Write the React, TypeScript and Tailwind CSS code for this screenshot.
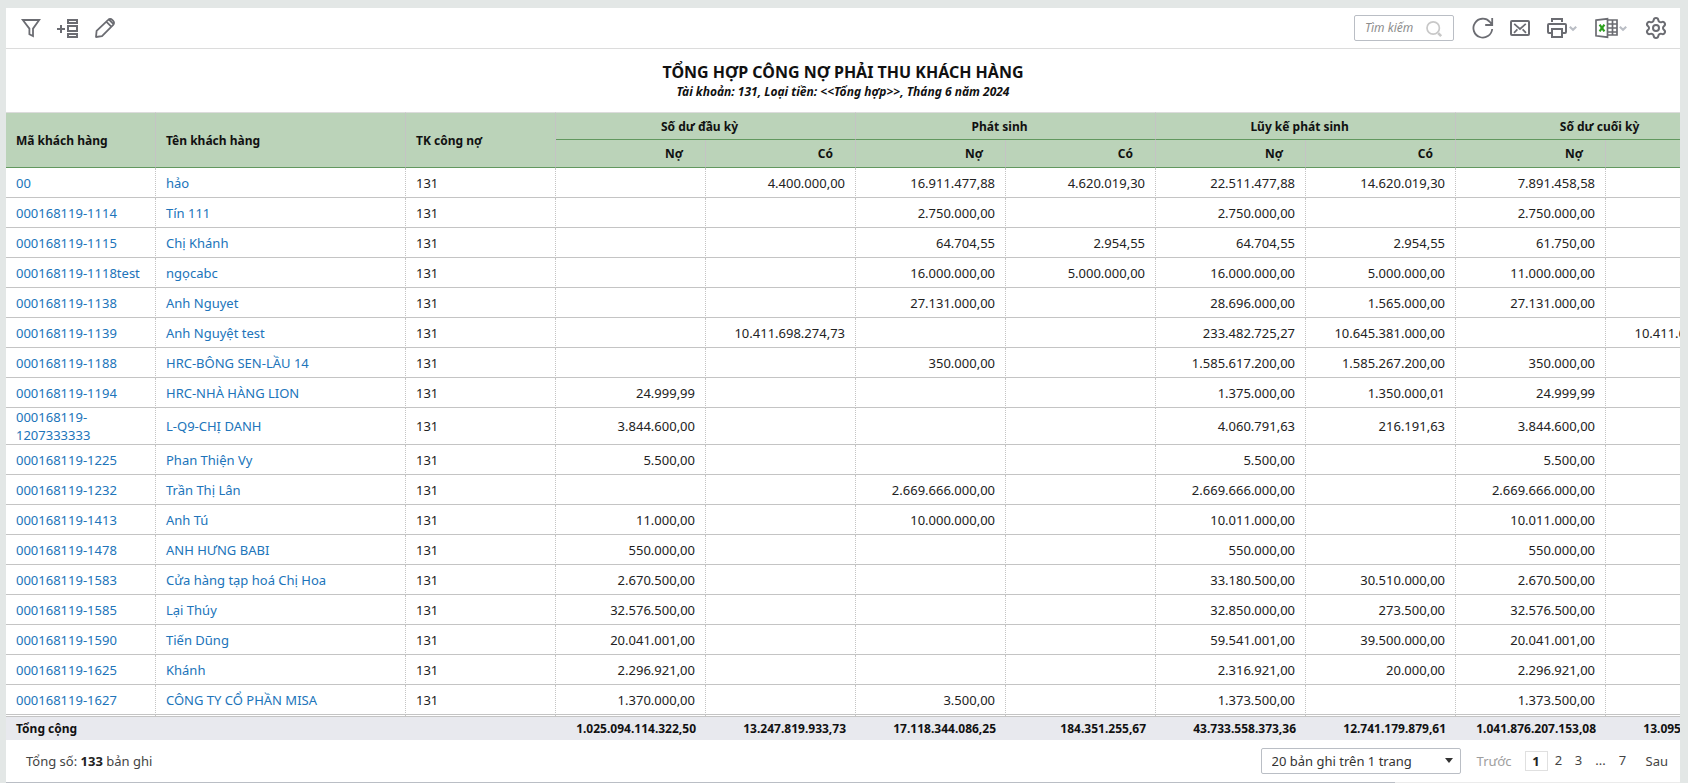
import React from "react";
import { Settings } from "lucide-react";

const groups = ["Số dư đầu kỳ", "Phát sinh", "Lũy kế phát sinh", "Số dư cuối kỳ"];

type Row = [string, string, string, string, string, string, string, string, string, string];

const rows: Row[] = [
  ["00", "hảo", "", "4.400.000,00", "16.911.477,88", "4.620.019,30", "22.511.477,88", "14.620.019,30", "7.891.458,58", ""],
  ["000168119-1114", "Tín 111", "", "", "2.750.000,00", "", "2.750.000,00", "", "2.750.000,00", ""],
  ["000168119-1115", "Chị Khánh", "", "", "64.704,55", "2.954,55", "64.704,55", "2.954,55", "61.750,00", ""],
  ["000168119-1118test", "ngọcabc", "", "", "16.000.000,00", "5.000.000,00", "16.000.000,00", "5.000.000,00", "11.000.000,00", ""],
  ["000168119-1138", "Anh Nguyet", "", "", "27.131.000,00", "", "28.696.000,00", "1.565.000,00", "27.131.000,00", ""],
  ["000168119-1139", "Anh Nguyệt test", "", "10.411.698.274,73", "", "", "233.482.725,27", "10.645.381.000,00", "", "10.411.698.274,73"],
  ["000168119-1188", "HRC-BÔNG SEN-LẦU 14", "", "", "350.000,00", "", "1.585.617.200,00", "1.585.267.200,00", "350.000,00", ""],
  ["000168119-1194", "HRC-NHÀ HÀNG LION", "24.999,99", "", "", "", "1.375.000,00", "1.350.000,01", "24.999,99", ""],
  ["000168119-1207333333", "L-Q9-CHỊ DANH", "3.844.600,00", "", "", "", "4.060.791,63", "216.191,63", "3.844.600,00", ""],
  ["000168119-1225", "Phan Thiện Vy", "5.500,00", "", "", "", "5.500,00", "", "5.500,00", ""],
  ["000168119-1232", "Trần Thị Lân", "", "", "2.669.666.000,00", "", "2.669.666.000,00", "", "2.669.666.000,00", ""],
  ["000168119-1413", "Anh Tú", "11.000,00", "", "10.000.000,00", "", "10.011.000,00", "", "10.011.000,00", ""],
  ["000168119-1478", "ANH HƯNG BABI", "550.000,00", "", "", "", "550.000,00", "", "550.000,00", ""],
  ["000168119-1583", "Cửa hàng tạp hoá Chị Hoa", "2.670.500,00", "", "", "", "33.180.500,00", "30.510.000,00", "2.670.500,00", ""],
  ["000168119-1585", "Lại Thúy", "32.576.500,00", "", "", "", "32.850.000,00", "273.500,00", "32.576.500,00", ""],
  ["000168119-1590", "Tiến Dũng", "20.041.001,00", "", "", "", "59.541.001,00", "39.500.000,00", "20.041.001,00", ""],
  ["000168119-1625", "Khánh", "2.296.921,00", "", "", "", "2.316.921,00", "20.000,00", "2.296.921,00", ""],
  ["000168119-1627", "CÔNG TY CỔ PHẦN MISA", "1.370.000,00", "", "3.500,00", "", "1.373.500,00", "", "1.373.500,00", ""],
];

const totals = [
  "1.025.094.114.322,50",
  "13.247.819.933,73",
  "17.118.344.086,25",
  "184.351.255,67",
  "43.733.558.373,36",
  "12.741.179.879,61",
  "1.041.876.207.153,08",
  "13.095.962.128,16",
];

function IconButton({ label, children }: { label: string; children: React.ReactNode }) {
  return (
    <button type="button" aria-label={label} className="flex h-6 shrink-0 items-center text-[#6b6c72]">
      {children}
    </button>
  );
}

function Icon({ children, w = 24 }: { children: React.ReactNode; w?: number }) {
  return (
    <svg width={w} height="24" viewBox={`0 0 ${w} 24`} fill="none" stroke="currentColor" strokeWidth="1.8" aria-hidden="true">
      {children}
    </svg>
  );
}

function Toolbar() {
  return (
    <div className="flex h-[41px] shrink-0 items-center justify-between border-b border-[#dcdcdc] pr-3 pl-[13px]">
      <div className="flex items-center gap-[13px]">
        <IconButton label="Lọc">
          <Icon>
            <path d="M3.800 4h16.400L14 12.600v7.400l-3.600-1.800v-5.600z" />
          </Icon>
        </IconButton>
        <IconButton label="Thêm cột">
          <Icon>
            <path d="M1 13h8M5 9v8M12 4h9v3h-9zM12 10h9v5h-9zM12 18h9v3h-9z" strokeWidth="2" />
          </Icon>
        </IconButton>
        <IconButton label="Sửa">
          <Icon>
            <path strokeLinejoin="round" d="M3 21l.6-6.200L15.200 3.800a2.800 2.800 0 0 1 4 0l1 1a2.800 2.800 0 0 1 0 4L9 20.200zM13.300 5.600l5.200 5.200M16 3.600l4.500 4.500" />
          </Icon>
        </IconButton>
      </div>
      <div className="flex items-center">
        <label className="flex h-[26px] w-[100px] items-center rounded-xs border border-[#babec5] pr-2 pl-[10px]">
          <input
            type="text"
            aria-label="Tìm kiếm"
            placeholder="Tìm kiếm"
            className="w-0 min-w-0 grow text-[12px] italic outline-none placeholder:text-[#8d8d8d]"
          />
          <svg width="20" height="20" viewBox="0 0 20 20" fill="none" stroke="#c8c8c8" aria-hidden="true">
            <circle cx="8.200" cy="10" r="6.200" strokeWidth="1.700" />
            <path d="M13.200 15.200l3 3" strokeWidth="2.600" />
          </svg>
        </label>
        <div className="ml-[17px] flex items-center gap-[13px]">
          <IconButton label="Tải lại">
            <Icon>
              <path d="M21.200 13A9.400 9.400 0 1 1 18.800 5.800L21 8.600M21.200 2v7h-7" />
            </Icon>
          </IconButton>
          <IconButton label="Gửi email">
            <Icon>
              <rect x="3" y="5" width="18" height="14" rx="1" strokeWidth="2" />
              <path d="M6.200 7.800L12 13l5.800-5.200M6 16.800l3.400-3.400M18 16.800l-3.400-3.400" strokeWidth="1.700" />
            </Icon>
          </IconButton>
          <IconButton label="In">
            <Icon w={37}>
              <path d="M7 6V3h10v3M7 17H4a1 1 0 0 1-1-1V9a1 1 0 0 1 1-1h16a1 1 0 0 1 1 1v7a1 1 0 0 1-1 1h-3M7 13h10v8H7z" strokeWidth="2" />
              <path d="M24.800 10.800l3.200 3 3.200-3" stroke="#babec5" strokeWidth="2.200" />
            </Icon>
          </IconButton>
          <IconButton label="Xuất Excel">
            <Icon w={36}>
              <path d="M1 4.200l11.500-1.400v18.400L1 19.800zM13 4h9v15h-9M17.500 4v15M13 8h9M13 12h9M13 16h9" strokeWidth="1.700" />
              <path d="M4.600 8.700l4.800 6.600M9.400 8.700l-4.800 6.600" stroke="#2ca01c" strokeWidth="2.200" />
              <path d="M24.800 10.800l3.200 3 3.200-3" stroke="#babec5" strokeWidth="2.200" />
            </Icon>
          </IconButton>
          <IconButton label="Tùy chỉnh">
            <Settings size={24} strokeWidth={2} aria-hidden="true" />
          </IconButton>
        </div>
      </div>
    </div>
  );
}

function ReportTable() {
  return (
    <table className="w-[1750px] table-fixed border-separate border-spacing-0 text-[13px] leading-[18px]">
      <colgroup>
        <col className="w-[150px]" />
        <col className="w-[250px]" />
        <col className="w-[150px]" />
        {totals.map((_, i) => (
          <col key={i} className="w-[150px]" />
        ))}
      </colgroup>
      <thead className="bg-[#bbd3b9] text-[12px] font-bold text-[#111]">
        <tr className="h-[28px]">
          {["Mã khách hàng", "Tên khách hàng", "TK công nợ"].map((h) => (
            <th key={h} rowSpan={2} scope="col" className="border-t border-r border-b border-t-[#dcdcdc] border-r-[#c4c4c4] border-b-[#62985f] px-[10px] pt-[2px] text-left">
              {h}
            </th>
          ))}
          {groups.map((g) => (
            <th key={g} colSpan={2} scope="colgroup" className="border-t border-r border-b border-t-[#dcdcdc] border-r-[#c4c4c4] border-b-[#62985f] pt-[2px] pr-[22px] pl-[10px] text-center">
              {g}
            </th>
          ))}
        </tr>
        <tr className="h-[28px]">
          {totals.map((_, i) => (
            <th key={i} scope="col" className="border-r border-b border-r-[#c4c4c4] border-b-[#62985f] pr-[22px] pl-[10px] text-right">
              {i % 2 === 0 ? "Nợ" : "Có"}
            </th>
          ))}
        </tr>
      </thead>
      <tbody className="text-[#222]">
        {rows.map(([code, name, ...values]) => (
          <tr key={code} className="h-[30px]">
            <td className="border-r border-b border-[#c4c4c4] px-[10px] [border-right-style:dotted]">
              <a href="#" className="text-[#2074ba]">{code}</a>
            </td>
            <td className="border-r border-b border-[#c4c4c4] px-[10px] [border-right-style:dotted]">
              <a href="#" className="text-[#2074ba]">{name}</a>
            </td>
            <td className="border-r border-b border-[#c4c4c4] px-[10px] [border-right-style:dotted]">131</td>
            {values.map((v, i) => (
              <td key={i} className="border-r border-b border-[#c4c4c4] px-[10px] text-right [border-right-style:dotted]">
                {v}
              </td>
            ))}
          </tr>
        ))}
        <tr className="h-[1px]">
          {[0, ...totals, 1, 2].map((_, i) => (
            <td key={i} className="h-[1px] border-r border-dotted border-[#c4c4c4]" />
          ))}
        </tr>
      </tbody>
      <tfoot className="bg-[#e8e9ee] text-[12px] font-bold text-[#111]">
        <tr className="h-[24px]">
          <td colSpan={3} className="border-t border-[#c4c4c4] px-[10px]">
            Tổng cộng
          </td>
          {totals.map((t, i) => (
            <td key={i} className="border-t border-[#c4c4c4] px-[10px] text-right">
              {t}
            </td>
          ))}
        </tr>
      </tfoot>
    </table>
  );
}

function Pager() {
  return (
    <div className="flex h-[42px] shrink-0 items-center justify-between pr-3 pl-5 text-[13px] text-[#444]">
      <p className="pt-[2px]">
        Tổng số: <b className="text-[#222]">133</b> bản ghi
      </p>
      <div className="flex items-center">
        <div className="relative">
          <select aria-label="Số bản ghi trên trang" className="h-[26px] w-[200px] appearance-none rounded-xs border border-[#babec5] bg-white pt-[2px] pl-[10px] text-[#333]">
            <option>20 bản ghi trên 1 trang</option>
          </select>
          <span className="pointer-events-none absolute top-[10px] right-2 border-x-4 border-t-5 border-x-transparent border-t-[#333]" />
        </div>
        <button type="button" disabled className="ml-4 pt-[2px] text-[#9e9e9e]">Trước</button>
        <nav className="ml-[13px] flex items-center" aria-label="Trang">
          <button type="button" aria-current="page" className="mr-[1px] h-5 w-[23px] border border-[#e0e0e0] leading-[18px] font-bold text-[#222]">1</button>
          <button type="button" className="w-5">2</button>
          <button type="button" className="w-5">3</button>
          <span className="w-6 text-center">...</span>
          <button type="button" className="w-5">7</button>
        </nav>
        <button type="button" className="ml-[13px] pt-[2px]">Sau</button>
      </div>
    </div>
  );
}

export default function App() {
  return (
    <div className="min-h-screen bg-[#e3e7e6] pt-2 pr-2 pl-[6px] font-['Noto_Sans',sans-serif]">
      <main className="overflow-hidden bg-white">
        <Toolbar />
        <header className="pt-[11px] pb-3 text-center text-[#111]">
          <h1 className="text-[16px] leading-[24px] font-bold">TỔNG HỢP CÔNG NỢ PHẢI THU KHÁCH HÀNG</h1>
          <p className="text-[12px] leading-[16px] font-bold italic">Tài khoản: 131, Loại tiền: &lt;&lt;Tổng hợp&gt;&gt;, Tháng 6 năm 2024</p>
        </header>
        <div className="overflow-hidden">
          <ReportTable />
        </div>
        <Pager />
        <div className="h-[1px] bg-[#ebebeb]">
          <div className="h-full w-[83%] bg-[#babec5]" />
        </div>
      </main>
    </div>
  );
}
